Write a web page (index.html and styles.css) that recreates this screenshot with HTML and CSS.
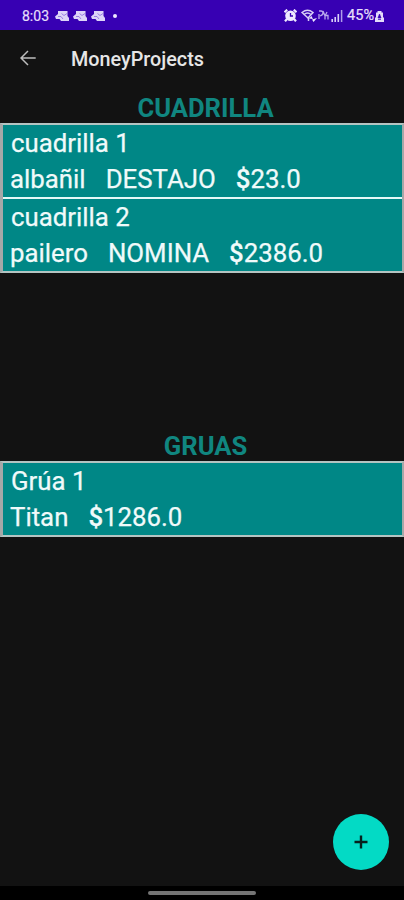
FILE: index.html
```html
<!DOCTYPE html>
<html lang="es">
  <head>
    <meta charset="UTF-8" />
    <meta name="viewport" content="width=device-width, initial-scale=1.0" />
    <title>MoneyProjects</title>
    <link rel="stylesheet" href="styles.css">
  </head>
  <body>
    <div class="screen">
      <div class="status-bar">
        <span class="clock">8:03</span>
        <div class="notifications">
          <svg viewBox="0 0 14 12"><path d="M3 1H12.500v5l1.500 2v3H6L4.500 9H1L0 6.500 3 4z" fill="#ddd4f8"/><path d="M6.500 3.500l2.500 2 3-2M3 6.500h3L8 9" fill="none" stroke="#8a6bdc" stroke-width=".8"/></svg>
          <svg viewBox="0 0 14 12"><path d="M3 1H12.500v5l1.500 2v3H6L4.500 9H1L0 6.500 3 4z" fill="#ddd4f8"/><path d="M6.500 3.500l2.500 2 3-2M3 6.500h3L8 9" fill="none" stroke="#8a6bdc" stroke-width=".8"/></svg>
          <svg viewBox="0 0 14 12"><path d="M3 1H12.500v5l1.500 2v3H6L4.500 9H1L0 6.500 3 4z" fill="#ddd4f8"/><path d="M6.500 3.500l2.500 2 3-2M3 6.500h3L8 9" fill="none" stroke="#8a6bdc" stroke-width=".8"/></svg>
          <span class="dot"></span>
        </div>
        <div class="system">
          <svg class="alarm" viewBox="0 0 13 13"><path d="M0.500 3.200L3.200 0.700M12.500 3.200L9.800 0.700M3 10L1 12.300M10 10l2 2.300" stroke="#eee9ff" stroke-width="2.200"/><circle cx="6.500" cy="6.700" r="5.300" fill="#eee9ff"/><path d="M6.500 4v3H9" fill="none" stroke="#3700b3" stroke-width="1.300"/></svg>
          <svg class="wifi" viewBox="0 0 16 13"><g fill="none" stroke="#d9d0f7" stroke-width="1.500"><path d="M1 3.500q5.500-4.500 11 0L7 9z"/><path d="M3 5.500q3.500-2.800 7 0M7.500 8v4"/></g><path d="M8 9.500l2.500-2.500 1.500 3zM11 10.500l1.500 2.500 3.500-4z" fill="#eee9ff"/></svg>
          <svg class="volte" viewBox="0 0 11 11"><path d="M1 1h2q2 0 2 2T2 6M1 4v5M5 1l2 5 2-4M7 6v3.500M7 5.500h3v4" fill="none" stroke="#b9a8ed" stroke-width="1.300"/></svg>
          <svg class="signal" viewBox="0 0 12 12"><path d="M1.200 9v3M4.200 7v5M7.300 4v8" stroke="#d9d0f7" stroke-width="1.600"/><path d="M10.600 0v12" stroke="#b09ce9" stroke-width="1.500"/></svg>
          <span class="battery-text">45%</span>
          <svg class="battery" viewBox="0 0 9 12"><path d="M2.500 1h4v1.500H8V7l1 1v4H0V8l1-1V2.500h1.500z" fill="#e3dcfa"/><path d="M4.500 4L3 8h3zM3 9.500h3" fill="#3700b3" stroke="#3700b3" stroke-width=".7"/></svg>
        </div>
      </div>

      <header class="app-bar">
        <svg class="back" viewBox="0 0 16 16"><path d="M15.700 8H1.200M8 1L1 8l7 7" fill="none" stroke="#bdbdbd" stroke-width="1.500"/></svg>
        <h1>MoneyProjects</h1>
      </header>

      <main>
        <section class="group group-cuadrilla">
          <h2>CUADRILLA</h2>
          <ul class="list">
            <li>
              <div class="name">cuadrilla 1</div>
              <div class="detail"><span>albañil</span><span>DESTAJO</span><span><b>$</b>23.0</span></div>
            </li>
            <li>
              <div class="name">cuadrilla 2</div>
              <div class="detail"><span>pailero</span><span>NOMINA</span><span><b>$</b>2386.0</span></div>
            </li>
          </ul>
        </section>

        <section class="group">
          <h2>GRUAS</h2>
          <ul class="list">
            <li>
              <div class="name">Grúa 1</div>
              <div class="detail"><span>Titan</span><span><b>$</b>1286.0</span></div>
            </li>
          </ul>
        </section>
      </main>

      <button class="fab" aria-label="Agregar">
        <svg viewBox="0 0 14 14"><path d="M7 .5v13M.5 7h13" stroke="#06201d" stroke-width="2.400"/></svg>
      </button>

      <div class="nav-bar"><span class="handle"></span></div>
    </div>
  </body>
</html>
```
FILE: styles.css
```css
* {
  box-sizing: border-box;
}
body {
  margin: 0;
  background-color: #121212;
  font-family: Roboto, sans-serif;
  color: #f0fafa;
}
h1, h2, ul {
  margin: 0;
  padding: 0;
}
svg {
  display: block;
}
.screen {
  position: relative;
  display: flex;
  flex-direction: column;
  width: 404px;
  height: 900px;
  overflow: hidden;
}
.status-bar {
  display: flex;
  align-items: center;
  height: 30px;
  padding: 1px 20px 0 22px;
  background-color: #3700b3;
  color: #e6dffa;
  font-size: 14px;
  -webkit-text-stroke: 0.2px #e6dffa;
}
.notifications {
  display: flex;
  align-items: center;
  gap: 4px;
  margin-left: 6px;
}
.notifications svg {
  width: 14px;
  height: 12px;
}
.dot {
  width: 4px;
  height: 4px;
  margin-left: 4px;
  border-radius: 50%;
  background-color: #eee9ff;
}
.system {
  display: flex;
  align-items: center;
  margin-left: auto;
}
.alarm {
  width: 13px;
  height: 13px;
  margin-right: 4px;
}
.wifi {
  width: 16px;
  height: 13px;
  margin-right: 1px;
}
.volte {
  width: 11px;
  height: 11px;
  margin-right: 2px;
}
.signal {
  width: 12px;
  height: 12px;
  margin-right: 4px;
}
.battery {
  width: 9px;
  height: 12px;
  margin-left: 1px;
}
.battery-text {
  font-size: 14.5px;
}
.app-bar {
  display: flex;
  align-items: center;
  height: 56px;
  padding-left: 20px;
}
.back {
  width: 16px;
  height: 16px;
}
.app-bar h1 {
  margin-left: 35px;
  padding-top: 2px;
  font-size: 19.8px;
  font-weight: 500;
  color: #e6e6e6;
}
main {
  flex: 1;
  padding-top: 4px;
}
.group-cuadrilla {
  height: 338px;
}
.group h2 {
  height: 33px;
  padding-left: 7px;
  line-height: 36px;
  font-size: 25.6px;
  font-weight: 700;
  text-align: center;
  color: #108680;
}
.list {
  list-style: none;
  border: 2px solid #b4c4c2;
  border-width: 2px 2px 2px 3px;
  border-left-color: #a5a8a8;
  border-right-color: #a5a8a8;
  background-color: #008786;
}
.list li {
  height: 72px;
  padding-left: 7px;
  font-size: 25.8px;
  line-height: 36px;
  -webkit-text-stroke: 0.25px #f0fafa;
}
.list li + li {
  height: 74px;
  border-top: 2px solid #e4f8f7;
}
.name {
  padding-left: 1px;
}
.detail {
  display: flex;
  gap: 20px;
}
.detail b {
  font-weight: 500;
}
.fab {
  position: absolute;
  right: 15px;
  bottom: 30px;
  display: flex;
  align-items: center;
  justify-content: center;
  width: 56px;
  height: 56px;
  padding: 0;
  border: none;
  border-radius: 50%;
  background-color: #03dac5;
}
.fab svg {
  width: 14px;
  height: 14px;
}
.nav-bar {
  display: flex;
  justify-content: center;
  height: 14px;
  padding-top: 5px;
  background-color: #000;
}
.handle {
  width: 108px;
  height: 4px;
  border-radius: 2px;
  background-color: #757575;
}
```
